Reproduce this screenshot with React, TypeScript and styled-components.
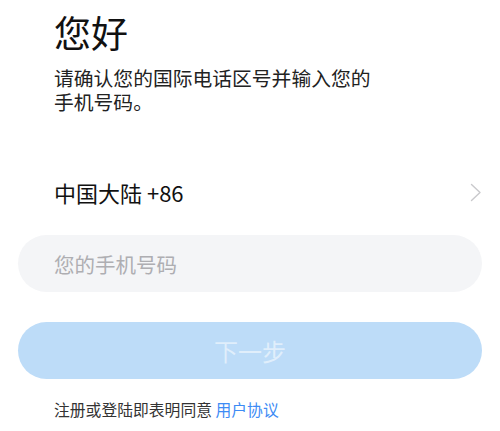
import styled, { createGlobalStyle } from "styled-components";

const GlobalStyle = createGlobalStyle`
  body {
    margin: 0;
    background: #ffffff;
    font-family: "Noto Sans CJK SC", "Noto Sans", sans-serif;
    -webkit-font-smoothing: antialiased;
  }
`;

function Chevron() {
  return (
    <svg width="12" height="19" viewBox="0 0 12 19" fill="none">
      <path d="M1.5 1.5 L10 9.5 L1.5 17.5" stroke="#c9c9cc" strokeWidth="1.4" strokeLinecap="round" strokeLinejoin="round" />
    </svg>
  );
}

function App() {
  return (
    <>
      <GlobalStyle />
      <StyledPage>
        <StyledHeader>
          <StyledTitle>您好</StyledTitle>
          <StyledSubtitle>
            请确认您的国际电话区号并输入您的
            <br />
            手机号码。
          </StyledSubtitle>
        </StyledHeader>
        <StyledCountryRow>
          <StyledCountry>中国大陆 +86</StyledCountry>
          <Chevron />
        </StyledCountryRow>
        <StyledInput placeholder="您的手机号码" />
        <StyledNextButton disabled>下一步</StyledNextButton>
        <StyledAgreement>
          注册或登陆即表明同意 <StyledLink>用户协议</StyledLink>
        </StyledAgreement>
      </StyledPage>
    </>
  );
}

const StyledPage = styled.div`
  display: flex;
  flex-direction: column;
  padding: 0 18px;
`;
const StyledHeader = styled.div`
  padding-left: 36px;
`;
const StyledTitle = styled.h1`
  margin: 10px 0 0;
  font-size: 37px;
  font-weight: 400;
  line-height: 44px;
  color: #111;
`;
const StyledSubtitle = styled.p`
  margin: 12px 0 0;
  font-size: 19.8px;
  line-height: 24px;
  color: #222;
`;
const StyledCountryRow = styled.div`
  display: flex;
  align-items: center;
  justify-content: space-between;
  height: 30px;
  margin-top: 63px;
  padding-left: 36px;
`;
const StyledCountry = styled.span`
  font-size: 22px;
  color: #111;
`;
const StyledInput = styled.input`
  box-sizing: border-box;
  height: 57px;
  margin-top: 28px;
  padding: 0 36px;
  border: none;
  border-radius: 29px;
  background: #f4f5f7;
  font-family: inherit;
  font-size: 20.5px;
  outline: none;
  &::placeholder {
    color: #aeaeb2;
  }
`;
const StyledNextButton = styled.button`
  height: 57px;
  margin-top: 30px;
  border: none;
  border-radius: 29px;
  background: #bddcf8;
  color: rgba(255, 255, 255, 0.55);
  font-family: inherit;
  font-size: 24px;
`;
const StyledAgreement = styled.p`
  margin: 21px 0 0;
  padding-left: 36px;
  font-size: 15.8px;
  line-height: 20px;
  color: #333;
`;
const StyledLink = styled.span`
  color: #3d8bf5;
`;

export default App;
